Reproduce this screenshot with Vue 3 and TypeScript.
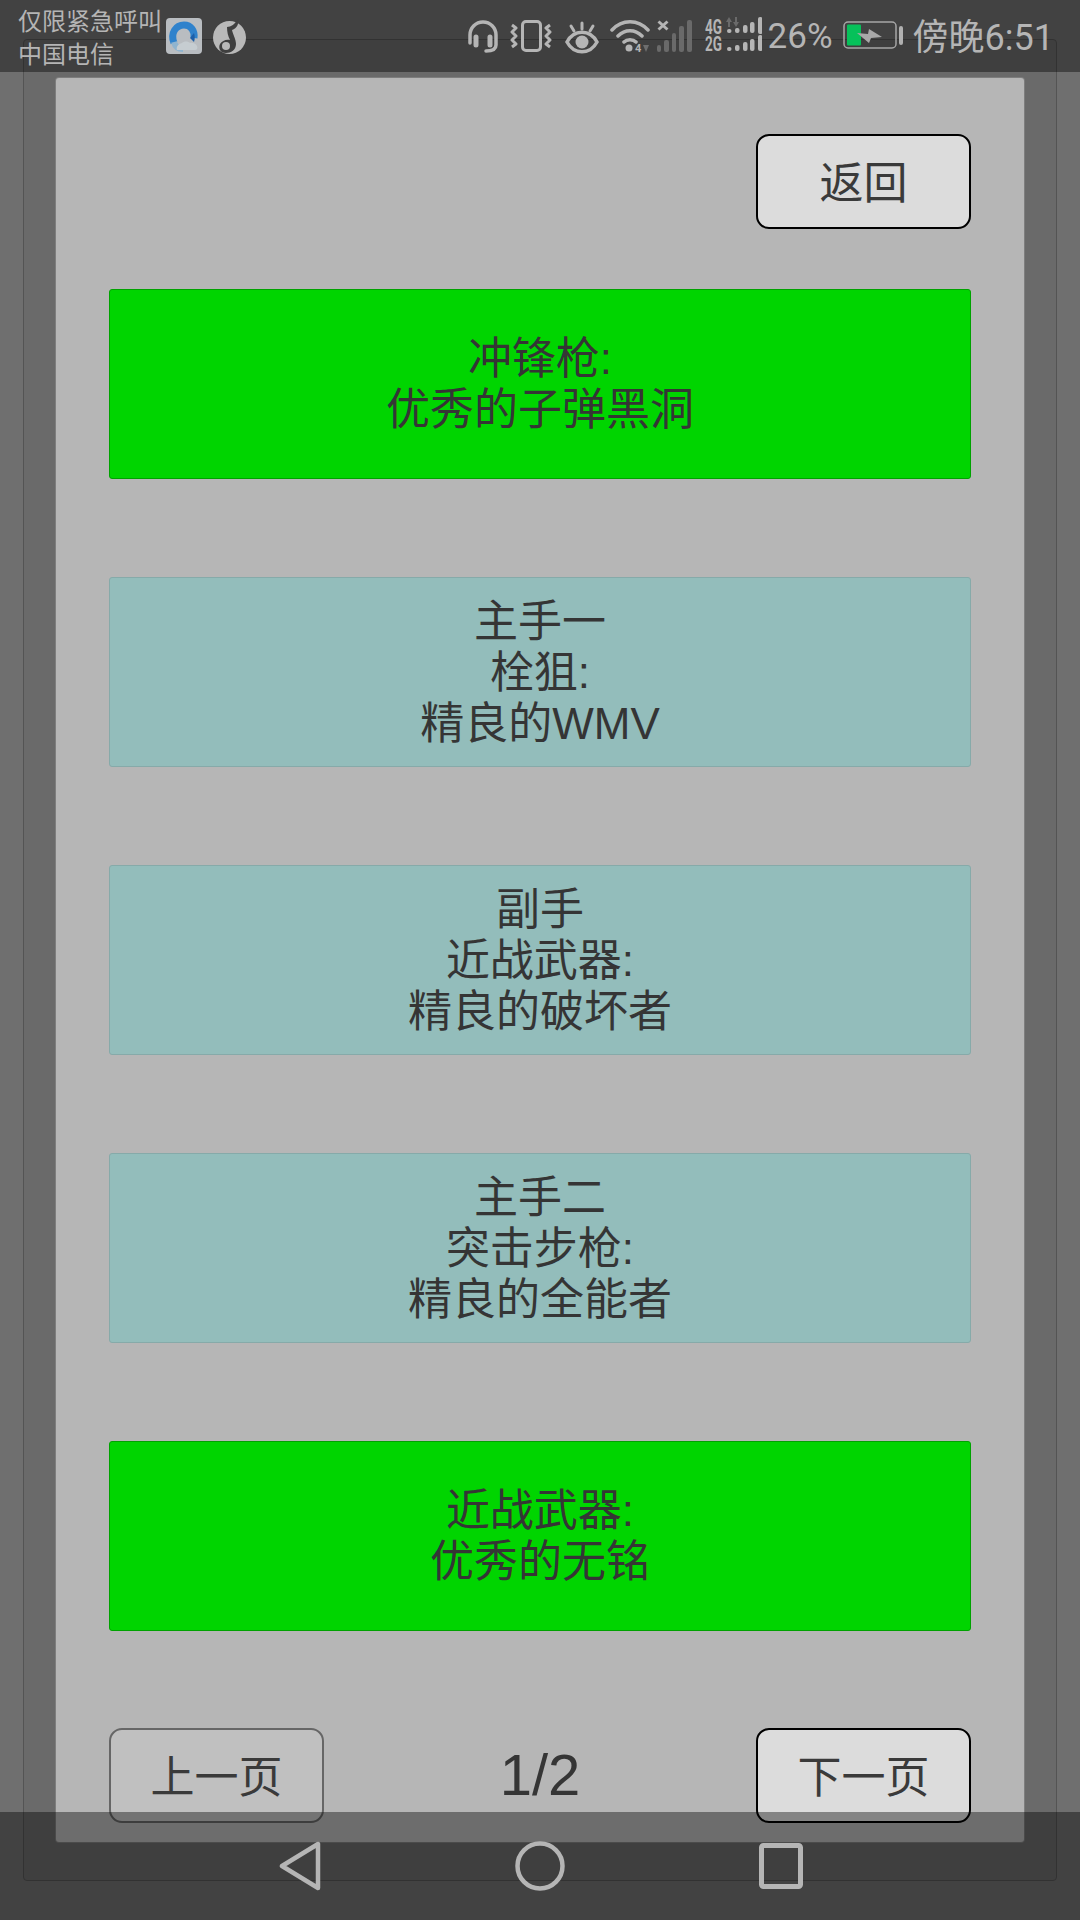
<script setup lang="ts">
interface Slot { lines: string[]; rare: boolean }
const slots: Slot[] = [
  { lines: ['冲锋枪:', '优秀的子弹黑洞'], rare: true },
  { lines: ['主手一', '栓狙:', '精良的WMV'], rare: false },
  { lines: ['副手', '近战武器:', '精良的破坏者'], rare: false },
  { lines: ['主手二', '突击步枪:', '精良的全能者'], rare: false },
  { lines: ['近战武器:', '优秀的无铭'], rare: true },
]
const bars: [number, number, number, number][] = [
  [15, 15, 20, 4], [23, 14, 20, 5], [31, 11, 20, 8], [38, 8, 20, 11], [46, 3, 20, 17],
  [15, 33, 37, 4], [23, 31, 37, 6], [31, 28, 37, 9], [38, 25, 37, 12], [46, 21, 37, 16],
]
</script>

<template>
  <div class="screen">
    <div class="frame">
      <main class="panel">
        <button class="btn btn-on back">返回</button>
        <div class="list">
          <div v-for="(s, i) in slots" :key="i" class="slot" :class="{ rare: s.rare }">
            <span v-for="l in s.lines" :key="l">{{ l }}</span>
          </div>
        </div>
        <footer class="pager">
          <button class="btn btn-off">上一页</button>
          <span class="page-no">1/2</span>
          <button class="btn btn-on">下一页</button>
        </footer>
      </main>
    </div>

    <header class="status">
      <div class="carrier">
        <span>仅限紧急呼叫</span>
        <span>中国电信</span>
      </div>
      <div class="apps">
        <svg width="36" height="36" viewBox="0 0 36 36" fill="none">
          <rect width="36" height="36" rx="4" fill="#b9bdc1" />
          <path d="M8 25C4 15 10 7 18 7c7 0 11 6 10 13" stroke="#2f82cc" stroke-width="7" />
          <path d="M28 15c1 3 1 6 0 9l-4-4z" fill="#1c5ea8" />
          <path d="M8 24c1 4 4 7 9 7" stroke="#8fb4cf" stroke-width="6" />
          <path d="M11 32c-1-3 1-6 5-7 2-2 6-2 8 0 3-1 6 1 7 3 1 2 0 4-2 4z" fill="#c6cdd1" />
        </svg>
        <svg width="33" height="35" viewBox="0 0 33 35">
          <circle cx="16.500" cy="18.500" r="16.500" fill="#b9b9b9" />
          <path d="M14 8c4 0 8-3 11-8 1 5-1 9-6 11 1 5 4 9 4 14 0 6-5 9-10 9-6 0-8-5-6-9 2-3 6-5 10-4-2-4-3-8-3-13z" fill="#3f3f3f" />
          <circle cx="13" cy="27" r="4" fill="#b9b9b9" />
        </svg>
      </div>
      <div class="indicators">
        <svg class="i-head" width="30" height="34" viewBox="0 0 30 34" fill="none" stroke="#b5b5b5" stroke-width="3.500" stroke-linecap="round">
          <path d="M2 23V15a13 13 0 0 1 26 0v10c0 4-3 6-10 6" />
          <path d="M8 17v8M22 17v8" stroke-width="5" />
        </svg>
        <svg class="i-vib" width="42" height="32" viewBox="0 0 42 32" fill="none" stroke="#b5b5b5" stroke-width="3" stroke-linejoin="round">
          <rect x="12.500" y="1.500" width="18" height="29" rx="3.500" />
          <path d="M2 5l4 3-4 4 4 4-4 4 4 4-4 3M40 5l-4 3 4 4-4 4 4 4-4 4 4 3" />
        </svg>
        <svg class="i-eye" width="34" height="33" viewBox="0 0 34 33" fill="none" stroke="#b5b5b5" stroke-width="3.500" stroke-linecap="round">
          <path d="M2 21C9 8 25 8 32 21 25 34 9 34 2 21z" />
          <circle cx="17" cy="21" r="6.500" fill="#b5b5b5" stroke="none" />
          <path d="M17 2v6M6 5l3 5M28 5l-3 5" stroke-width="3" />
        </svg>
        <svg class="i-wifi" width="40" height="36" viewBox="0 0 40 36" fill="none" stroke="#b5b5b5" stroke-width="3.500" stroke-linecap="round">
          <path d="M2 10c10-11 26-11 36 0M8 16c7-7 17-7 24 0M14 22c3-3 9-3 12 0" />
          <circle cx="19" cy="28" r="3.500" fill="#b5b5b5" stroke="none" />
          <text x="25" y="32" class="tiny" fill="#b5b5b5" stroke="none">4</text>
          <path d="M33 25h6l-3 7z" fill="#6e6e6e" stroke="none" />
        </svg>
        <svg class="i-sig" width="35" height="32" viewBox="0 0 35 32">
          <path d="M1.500 1.500l9 8M10.500 1.500l-9 8" stroke="#b5b5b5" stroke-width="3" fill="none" />
          <g fill="#6a6a6a">
            <rect x="0" y="25" width="4" height="7" rx="2" />
            <rect x="7" y="20" width="5" height="12" rx="2" />
            <rect x="15" y="13" width="4" height="19" rx="2" />
            <rect x="22" y="6" width="5" height="26" rx="2" />
            <rect x="30" y="0" width="5" height="32" rx="2" />
          </g>
        </svg>
        <svg class="i-net" width="57" height="44" viewBox="0 0 57 44" fill="#b5b5b5">
          <text x="0" y="20" class="gen" textLength="17" lengthAdjust="spacingAndGlyphs">4G</text>
          <text x="0" y="37" class="gen" textLength="17" lengthAdjust="spacingAndGlyphs">2G</text>
          <rect v-for="(b, i) in bars" :key="i" :x="b[0] + 7" :y="b[1]" :width="4.5" :height="b[3]" rx="2" />
          <path d="M24 3l3 5h-2v5h-2V8h-2zM31 13l3-5h-2V3h-2v5h-2z" fill="#6a6a6a" />
        </svg>
        <span class="pct">26%</span>
        <svg class="i-bat" width="60" height="28" viewBox="0 0 60 28">
          <rect x="1" y="1" width="52" height="26" rx="4" fill="none" stroke="#a6a6a6" stroke-width="1.500" />
          <rect x="4" y="3.500" width="14" height="21" rx="1" fill="#06c15a" />
          <path d="M14 12l11 1 1-5 13 8-11 1-2 5z" fill="#a8a8a8" />
          <rect x="56" y="5" width="4" height="19" rx="2" fill="#b0b0b0" />
        </svg>
        <span class="clock">傍晚6:51</span>
      </div>
    </header>

    <nav class="nav">
      <svg width="42" height="50" viewBox="0 0 42 50" fill="none" stroke="#b5b5b5" stroke-width="4.500" stroke-linejoin="round">
        <path d="M39 3v44L3 25z" />
      </svg>
      <svg width="50" height="50" viewBox="0 0 50 50" fill="none" stroke="#b5b5b5" stroke-width="4.500">
        <circle cx="25" cy="25" r="22.500" />
      </svg>
      <svg width="44" height="46" viewBox="0 0 44 46" fill="none" stroke="#b5b5b5" stroke-width="5" stroke-linejoin="round">
        <rect x="2.500" y="2.500" width="39" height="41" rx="2" />
      </svg>
    </nav>
  </div>
</template>

<style scoped>
.screen {
  position: relative;
  width: 1080px;
  height: 1920px;
  overflow: hidden;
  display: flex;
  background: #6f6f6f;
  font-family: "Liberation Sans", "Noto Sans CJK SC", sans-serif;
  color: #353535;
}
.frame {
  flex: 1;
  display: flex;
  margin: 39px 23px;
  padding: 38px 32px;
  border: 1.5px solid #545454;
  border-radius: 4px;
  background: #6a6a6a;
}
.panel {
  flex: 1;
  display: flex;
  flex-direction: column;
  padding: 56px 53px 18px;
  background: #b6b6b6;
  border-radius: 3px;
  box-shadow: 0 0 0 1px #7e7e7e;
}
.btn {
  flex: none;
  box-sizing: border-box;
  width: 215px;
  height: 95px;
  padding: 0 0 3px;
  border-radius: 13px;
  font: inherit;
  font-size: 44px;
  color: #3a3a3a;
}
.btn-on {
  background: #dcdcdc;
  border: 2.500px solid #000;
}
.btn-off {
  background: #c0c0c0;
  border: 2px solid #666;
}
.back {
  align-self: flex-end;
}
.list {
  flex: none;
  display: flex;
  flex-direction: column;
  gap: 98px;
  margin-top: 60px;
}
.slot {
  box-sizing: border-box;
  height: 190px;
  display: flex;
  flex-direction: column;
  align-items: center;
  justify-content: center;
  background: #93bdbb;
  border: 1.500px solid #86aaa9;
  border-radius: 3px;
  font-size: 44px;
  line-height: 51px;
}
.slot.rare {
  background: #00d500;
  border-color: #00a200;
}
.pager {
  flex: none;
  margin-top: 97px;
  display: flex;
  align-items: center;
  justify-content: space-between;
}
.page-no {
  font-size: 58px;
  margin-bottom: 3px;
}
.status {
  position: absolute;
  top: 0;
  left: 0;
  right: 0;
  height: 72px;
  display: flex;
  align-items: center;
  padding: 0 26px 0 18px;
  background: rgba(0, 0, 0, 0.4);
  color: #b5b5b5;
  font-family: Roboto, "Noto Sans CJK SC", sans-serif;
}
.carrier {
  display: flex;
  flex-direction: column;
  font-size: 24px;
  line-height: 33px;
  width: 148px;
  margin-top: 5px;
}
.apps {
  display: flex;
  align-items: flex-end;
  gap: 11px;
}
.indicators {
  margin-left: auto;
  align-self: flex-start;
  padding-top: 20px;
  display: flex;
  align-items: flex-start;
}
.i-vib { margin-left: 12px; }
.i-eye { margin-left: 13px; margin-top: 1px; }
.i-wifi { margin-left: 11px; }
.i-sig { margin-left: 7px; }
.i-net { margin-left: 13px; margin-top: -6px; }
.i-bat { margin-left: 10px; margin-top: 1px; flex: none; }
.tiny {
  font: 700 11px Roboto, sans-serif;
}
.gen {
  font: 700 21px Roboto, sans-serif;
}
.pct {
  font-size: 35px;
  line-height: 34px;
  margin-left: 6px;
}
.clock {
  font-size: 36px;
  line-height: 36px;
  margin-left: 10px;
}
.nav {
  position: absolute;
  left: 0;
  right: 0;
  bottom: 0;
  height: 108px;
  display: flex;
  align-items: center;
  justify-content: center;
  gap: 194px;
  padding-left: 2px;
  background: rgba(0, 0, 0, 0.4);
}
</style>
